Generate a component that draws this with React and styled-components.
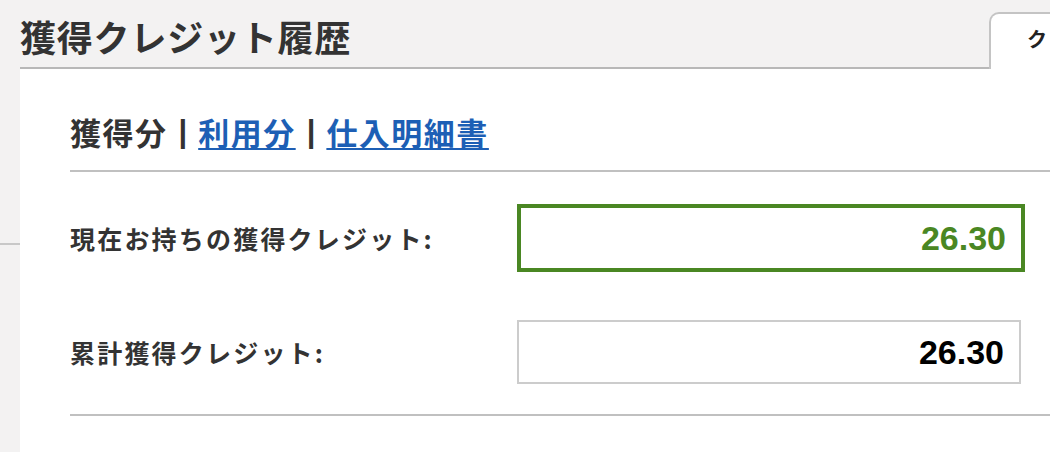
import styled, { createGlobalStyle } from 'styled-components';

const GlobalStyle = createGlobalStyle`
	html, body {
		margin: 0;
		padding: 0;
		background: #f3f2f2;
		overflow: hidden;
	}
	body {
		font-family: 'Liberation Sans', 'Noto Sans CJK JP', sans-serif;
		color: #333333;
	}
`;

const credits = [
	{ label: '現在お持ちの獲得クレジット:', value: '26.30', current: true },
	{ label: '累計獲得クレジット:', value: '26.30', current: false },
];

const App = () => {
	return (
		<>
			<GlobalStyle />
			<Page>
				<Header>
					<Title>獲得クレジット履歴</Title>
					<Tab>クレジット</Tab>
				</Header>
				<Body>
					<Sidebar>
						<SideItem />
					</Sidebar>
					<Panel>
						<SubNav>
							<span>獲得分</span>
							<Sep>|</Sep>
							<a href="#used">利用分</a>
							<Sep>|</Sep>
							<a href="#invoice">仕入明細書</a>
						</SubNav>
						<Rows>
							{credits.map((item) => (
								<Row key={item.label}>
									<Label>{item.label}</Label>
									<ValueBox $current={item.current}>{item.value}</ValueBox>
								</Row>
							))}
						</Rows>
					</Panel>
				</Body>
			</Page>
		</>
	);
};

export default App;

const Page = styled.div`
	width: 1050px;
	height: 452px;
	overflow: hidden;
	display: flex;
	flex-direction: column;
	background: #f3f2f2;
`;

const Header = styled.div`
	display: flex;
	align-items: flex-end;
	height: 69px;
	flex-shrink: 0;
`;

const Title = styled.h1`
	flex: 0 0 969px;
	margin: 0 0 0 20px;
	height: 67px;
	box-sizing: border-box;
	padding-top: 14px;
	border-bottom: 2px solid #b8b8b8;
	font-family: 'Noto Sans CJK JP', sans-serif;
	font-size: 36px;
	line-height: 40px;
	font-weight: 700;
	letter-spacing: 0.8px;
	color: #333333;
`;

const Tab = styled.div`
	flex: 0 0 120px;
	height: 57px;
	box-sizing: border-box;
	background: #ffffff;
	border: 2px solid #c4c4c4;
	border-bottom: none;
	border-top-left-radius: 10px;
	padding: 13px 0 0 36px;
	font-family: 'Noto Sans CJK JP', sans-serif;
	font-size: 20px;
	font-weight: 700;
	line-height: 24px;
	white-space: nowrap;
	overflow: hidden;
	color: #222222;
`;

const Body = styled.div`
	display: flex;
	flex: 1;
`;

const Sidebar = styled.div`
	flex: 0 0 20px;
`;

const SideItem = styled.div`
	height: 174px;
	border-bottom: 2px solid #c8c8c8;
`;

const Panel = styled.div`
	flex: 1;
	background: #ffffff;
	padding: 44px 0 0 50px;
`;

const SubNav = styled.div`
	display: flex;
	align-items: flex-start;
	gap: 11px;
	height: 57px;
	border-bottom: 2px solid #c0c0c0;
	font-family: 'Noto Sans CJK JP', sans-serif;
	font-size: 31px;
	font-weight: 700;
	line-height: 38px;
	letter-spacing: 1.5px;
	color: #333333;

	a {
		color: #1d5fb5;
		text-decoration: underline;
		text-decoration-thickness: 2px;
		text-underline-offset: 3px;
	}
`;

const Sep = styled.span`
	font-family: 'Liberation Sans', sans-serif;
	letter-spacing: 0;
`;

const Rows = styled.div`
	display: flex;
	flex-direction: column;
	gap: 48px;
	padding: 32px 0 30px;
	border-bottom: 2px solid #c0c0c0;
`;

const Row = styled.div`
	display: flex;
	align-items: center;
`;

const Label = styled.div`
	flex: 0 0 447px;
	font-family: 'Noto Sans CJK JP', sans-serif;
	font-size: 25px;
	font-weight: 700;
	letter-spacing: 2.2px;
	color: #333333;
`;

const ValueBox = styled.div`
	width: 470px;
	height: 60px;
	display: flex;
	align-items: center;
	justify-content: flex-end;
	padding: 0 15px;
	box-sizing: content-box;
	border: ${(p) => (p.$current ? '4px solid #4a8723' : '2px solid #cccccc')};
	font-family: 'Liberation Sans', sans-serif;
	font-size: 34px;
	font-weight: 700;
	color: ${(p) => (p.$current ? '#4a8723' : '#000000')};
`;
